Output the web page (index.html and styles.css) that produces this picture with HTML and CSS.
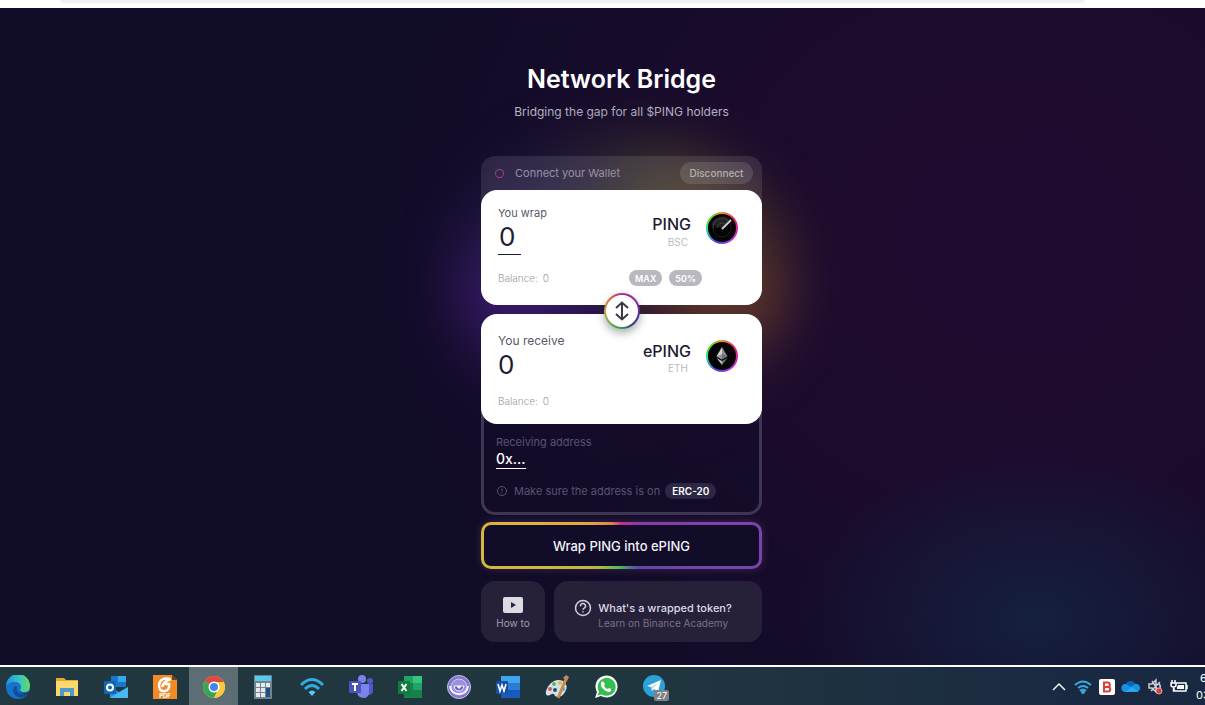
FILE: index.html
```html
<!DOCTYPE html>
<html lang="en">
<head>
    <meta charset="UTF-8">
    <meta name="viewport" content="width=device-width, initial-scale=1.0">
    <title>Network Bridge</title>
    <link rel="stylesheet" href="styles.css">
</head>
<body>
    <div class="browser-bar"><div class="address-bar"></div></div>

    <main class="page">
        <header class="intro">
            <h1>Network Bridge</h1>
            <p>Bridging the gap for all $PING holders</p>
        </header>

        <form class="bridge">
            <div class="glow"></div>

            <div class="wallet">
                <span class="wallet-ring"></span>
                <span class="wallet-text">Connect your Wallet</span>
                <button type="button" class="disconnect">Disconnect</button>
            </div>

            <div class="cards">
                <section class="card card-from">
                    <div class="amount">
                        <label for="wrapAmount">You wrap</label>
                        <input type="text" id="wrapAmount" class="amount-input" value="0">
                        <p class="balance">Balance: <span>0</span></p>
                    </div>
                    <div class="token">
                        <div class="token-row">
                            <div class="token-name">
                                <strong>PING</strong>
                                <span>BSC</span>
                            </div>
                            <div class="coin">
                                <svg viewBox="0 0 28 28" width="28" height="28">
                                    <circle cx="14" cy="14" r="14" fill="#050505"/>
                                    <path d="M14 14 22 5A12 12 0 0 0 3 11Z" fill="#222"/>
                                    <circle cx="14" cy="14" r="9" fill="none" stroke="#1c1c1c"/>
                                    <path d="M5 14A9 9 0 0 1 20 7M9 14A5 5 0 0 1 17 10" fill="none" stroke="#444"/>
                                    <path d="M14 15 23 6" stroke="#ccc" stroke-width="2"/>
                                </svg>
                            </div>
                        </div>
                        <div class="shares">
                            <button type="button">MAX</button>
                            <button type="button">50%</button>
                        </div>
                    </div>
                </section>

                <section class="card card-to">
                    <div class="amount">
                        <span class="amount-label">You receive</span>
                        <output class="amount-value">0</output>
                        <p class="balance">Balance: <span>0</span></p>
                    </div>
                    <div class="token">
                        <div class="token-row">
                            <div class="token-name">
                                <strong>ePING</strong>
                                <span>ETH</span>
                            </div>
                            <div class="coin">
                                <svg viewBox="0 0 28 28" width="28" height="28">
                                    <circle cx="14" cy="14" r="14" fill="#050505"/>
                                    <path d="M14 5 8.500 14.500 14 17.500Z" fill="#d5d5d5"/>
                                    <path d="M14 5 19.500 14.500 14 17.500Z" fill="#8d8d8d"/>
                                    <path d="M8.500 16 14 23V19Z" fill="#bbb"/>
                                    <path d="M19.500 16 14 23V19Z" fill="#777"/>
                                    <path d="M8.500 14.500 14 12 19.500 14.500 14 17.500Z" fill="#555" opacity=".5"/>
                                </svg>
                            </div>
                        </div>
                    </div>
                </section>

                <button type="button" class="swap" aria-label="Swap direction">
                    <svg viewBox="0 0 20 20" width="20" height="20" fill="none" stroke="#3a3748" stroke-width="2">
                        <path d="M10 2V18M4 7 10 1.500 16 7M4 13 10 18.500 16 13"/>
                    </svg>
                </button>
            </div>

            <div class="receiver">
                <label for="address">Receiving address</label>
                <input type="text" id="address" placeholder="0x...">
                <p class="hint">
                    <svg viewBox="0 0 12 12" width="12" height="12" fill="none" stroke="currentColor">
                        <circle cx="6" cy="6" r="4.500"/>
                        <path d="M6 3.500V6.500M6 7.500V8.500"/>
                    </svg>
                    <span>Make sure the address is on</span>
                    <b>ERC-20</b>
                </p>
            </div>

            <button type="submit" class="submit">Wrap PING into ePING</button>

            <nav class="links">
                <a href="#how-to" class="how-to">
                    <svg viewBox="0 0 22 16" width="22" height="16">
                        <rect x="1" y="0" width="20" height="16" rx="2" fill="#dddbe2"/>
                        <path d="M9 5 14 8 9 11Z" fill="#28223f"/>
                    </svg>
                    <span>How to</span>
                </a>
                <a href="#wrapped" class="learn">
                    <svg viewBox="0 0 18 18" width="18" height="18" fill="none" stroke="#d3d0de" stroke-width="1.500">
                        <circle cx="9" cy="9" r="7.500"/>
                        <path d="M6.500 7.200A2.500 2.500 0 1 1 10.200 9.200Q9 9.800 9 10.800M9 12.200V13.500"/>
                    </svg>
                    <span class="learn-text">
                        <strong>What's a wrapped token?</strong>
                        <span>Learn on Binance Academy</span>
                    </span>
                </a>
            </nav>
        </form>
    </main>

    <footer class="taskbar">
        <div class="apps">
            <button type="button" aria-label="Edge">
                <svg viewBox="0 0 24 24" width="24" height="24">
                    <defs><linearGradient id="edge" x1="0" y1="0" x2="1" y2="0"><stop offset="0" stop-color="#1f8fdb"/><stop offset=".5" stop-color="#35bfd0"/><stop offset="1" stop-color="#66dc60"/></linearGradient></defs>
                    <circle cx="12" cy="12" r="12" fill="#1673cb"/>
                    <path d="M0 11A12 12 0 0 1 24 11Q24 17 18 17 14 17 14 15 16 12 14 9 11 6 6 7 2 8 0 11Z" fill="url(#edge)"/>
                    <path d="M8 12Q5 19 12 22 18 24 22 18 16 21 12 17 10 15 11 11Z" fill="#124d97"/>
                    <path d="M14 15Q14 18 19 18L23 17Q25 18 24 21L20 19Q13 19 14 15Z" fill="#203840"/>
                </svg>
            </button>
            <button type="button" aria-label="File Explorer">
                <svg viewBox="0 0 24 24" width="24" height="24">
                    <path d="M1 3H9L11 5H23V21H1Z" fill="#e2a92d"/>
                    <path d="M1 6H23V21H1Z" fill="#fbd76d"/>
                    <path d="M5 13H19V21H15V17H9V21H5Z" fill="#4c9bc9"/>
                </svg>
            </button>
            <button type="button" aria-label="Outlook">
                <svg viewBox="0 0 24 24" width="24" height="24">
                    <path d="M7 1H22V12H7Z" fill="#1976c9"/>
                    <path d="M14 1H22V7H14Z" fill="#39a8e8"/>
                    <path d="M6 12 15 17 24 12V23H6Z" fill="#2492df"/>
                    <path d="M6 23 24 12V23Z" fill="#49b8ee"/>
                    <rect y="6" width="12" height="13" rx="1" fill="#0f66b7"/>
                    <circle cx="6" cy="12.500" r="3" fill="none" stroke="#fff" stroke-width="2"/>
                </svg>
            </button>
            <button type="button" aria-label="PDF reader">
                <svg viewBox="0 0 24 24" width="24" height="24">
                    <path d="M0 0H19L24 5V24H0Z" fill="#f28a27"/>
                    <path d="M19 0V5H24Z" fill="#6b431f"/>
                    <path d="M17 4Q7 2 6 10 6 17 12 16 17 15 16 9H11M9 12Q11 6 18 4" fill="none" stroke="#fff" stroke-width="2.500"/>
                    <text x="12" y="23" class="pdf-text">PDF</text>
                </svg>
            </button>
            <button type="button" class="active" aria-label="Chrome">
                <svg viewBox="0 0 24 24" width="24" height="24">
                    <circle cx="12" cy="12" r="11" fill="#f9cb3c"/>
                    <path d="M12 12 2.500 6.500A11 11 0 0 1 21.500 6.500Z" fill="#dc4a3f"/>
                    <path d="M12 12 2.500 6.500A11 11 0 0 0 12 23L16 14Z" fill="#35a557"/>
                    <path d="M12 7H21.800A11 11 0 0 1 12 23L16.500 14Z" fill="#f9cb3c"/>
                    <circle cx="12" cy="12" r="5.500" fill="#fff"/>
                    <circle cx="12" cy="12" r="4" fill="#4385ee"/>
                </svg>
            </button>
            <button type="button" aria-label="Calculator">
                <svg viewBox="0 0 24 24" width="24" height="24">
                    <rect x="3" width="18" height="24" rx="1" fill="#71838d"/>
                    <rect x="4" y="1" width="16" height="5" fill="#5bc9ea"/>
                    <path d="M5 8H9V12H5ZM10 8H14V12H10ZM15 8H19V12H15ZM5 13H9V17H5ZM10 13H14V17H10ZM5 18H9V22H5ZM10 18H14V22H10Z" fill="#e5eaed"/>
                    <path d="M15 13H19V22H15Z" fill="#1d4f86"/>
                </svg>
            </button>
            <button type="button" aria-label="Wireless">
                <svg viewBox="0 0 24 24" width="24" height="24" fill="none" stroke="#35a9e1" stroke-width="3">
                    <path d="M1 10Q12-1 23 10M5 14Q12 7 19 14"/>
                    <path d="M8.500 17Q12 14 15.500 17L12 21Z" fill="#5cc8f2" stroke="none"/>
                </svg>
            </button>
            <button type="button" aria-label="Teams">
                <svg viewBox="0 0 24 24" width="24" height="24">
                    <circle cx="13" cy="4" r="4" fill="#7b83eb"/>
                    <circle cx="21" cy="6" r="3" fill="#5059c9"/>
                    <path d="M17 9H24V16Q24 20 19 20Z" fill="#5059c9"/>
                    <path d="M8 9H20V17Q20 23 14 23 8 22 8 17Z" fill="#7b83eb"/>
                    <rect y="6" width="12" height="12" rx="1" fill="#4b53bc"/>
                    <path d="M3 9H9M6 9V16" stroke="#fff" stroke-width="2"/>
                </svg>
            </button>
            <button type="button" aria-label="Excel">
                <svg viewBox="0 0 24 24" width="24" height="24">
                    <path d="M6 1H24V23H6Z" fill="#188048"/>
                    <path d="M6 1H15V8H6Z" fill="#21a366"/>
                    <path d="M15 1H24V8H15Z" fill="#36c481"/>
                    <path d="M15 8H24V15H15Z" fill="#21a366"/>
                    <rect y="6" width="12" height="13" rx="1" fill="#107c41"/>
                    <path d="M3.500 9 8.500 16M8.500 9 3.500 16" stroke="#fff" stroke-width="2"/>
                </svg>
            </button>
            <button type="button" aria-label="Assistant">
                <svg viewBox="0 0 24 24" width="24" height="24">
                    <circle cx="12" cy="12" r="11.500" fill="#8076cf" stroke="#c7c2ee"/>
                    <circle cx="12" cy="12" r="8" fill="#9a91df" stroke="#cdc8f2"/>
                    <path d="M3 11Q4 19 12 19T21 11" fill="none" stroke="#f4f2ff" stroke-width="2"/>
                    <path d="M7 11H17Q16 16 12 16T7 11Z" fill="#6c60bd" stroke="#f4f2ff"/>
                    <path d="M10 11H14V12L12 14 10 12Z" fill="#f4f2ff"/>
                </svg>
            </button>
            <button type="button" aria-label="Word">
                <svg viewBox="0 0 24 24" width="24" height="24">
                    <path d="M5 1H24V23H5Z" fill="#185abd"/>
                    <path d="M5 1H24V8H5Z" fill="#41a5ee"/>
                    <path d="M5 8H24V15H5Z" fill="#2b7cd3"/>
                    <rect y="6" width="12" height="13" rx="1" fill="#1550a5"/>
                    <path d="M2 9 4 16 6 10 8 16 10 9" fill="none" stroke="#fff" stroke-width="1.600"/>
                </svg>
            </button>
            <button type="button" aria-label="Paint">
                <svg viewBox="0 0 24 24" width="24" height="24">
                    <path d="M5 9Q11 3 18 6 24 10 20 17 16 24 10 21 9 17 5 20 0 22 1 16 2 12 5 9Z" fill="#d2e2ea"/>
                    <circle cx="5" cy="14" r="2" fill="#d95853"/>
                    <circle cx="9" cy="9" r="2" fill="#69b365"/>
                    <circle cx="15" cy="8" r="2" fill="#e7b746"/>
                    <circle cx="10" cy="15" r="2" fill="#294a70"/>
                    <circle cx="18" cy="14" r="2" fill="#4ba2d6"/>
                    <path d="M21 4 13 23" stroke="#c88b4b" stroke-width="3"/>
                    <path d="M18 3 21 0 24 2 22 6Z" fill="#bd8a61"/>
                </svg>
            </button>
            <button type="button" aria-label="WhatsApp">
                <svg viewBox="0 0 24 24" width="24" height="24">
                    <path d="M1 23 3 17A11 11 0 1 1 7 21Z" fill="#fff"/>
                    <path d="M3.500 20.500 5 16.500A9 9 0 1 1 8 19.500Z" fill="#35bd52"/>
                    <path d="M8 6.500Q10 6 11 9.500L10 11Q11 13 13.500 14L15 13Q18 14 17 16 15 18 11 15.500 6 12 7 8Z" fill="#fff"/>
                </svg>
            </button>
            <button type="button" aria-label="Telegram">
                <svg viewBox="0 0 24 24" width="24" height="24">
                    <circle cx="11" cy="11" r="11" fill="#2ca0d9"/>
                    <path d="M4 11 18 5 15 17 11 14 9 16 8 12Z" fill="#fff"/>
                    <path d="M8 12 15 8 10 13 9 16Z" fill="#b7d9eb"/>
                </svg>
                <span class="badge">27</span>
            </button>
        </div>
        <div class="tray">
            <svg viewBox="0 0 24 24" width="24" height="24" fill="none" stroke="#f0f2f5" stroke-width="1.500"><path d="M6 15 12 9 18 15"/></svg>
            <svg viewBox="0 0 24 24" width="24" height="24" fill="none" stroke="#38a8dd" stroke-width="2"><path d="M4 10Q12 3 20 10M7 13Q12 9 17 13M9 16Q12 13 15 16"/><circle cx="12" cy="17" r="1" fill="#75d3fa"/></svg>
            <svg viewBox="0 0 24 24" width="24" height="24"><rect x="4" y="4" width="16" height="16" rx="2" fill="#fff"/><path d="M9 7.500H12.500A2 2 0 0 1 12.500 12H9ZM9 12H13A2 2 0 0 1 13 16.500H9Z" fill="none" stroke="#dc3e3b" stroke-width="2"/></svg>
            <svg viewBox="0 0 24 24" width="24" height="24"><path d="M6 17A4 4 0 0 1 7 9 5 5 0 0 1 16 9 4 4 0 0 1 18 17Z" fill="#1593e5"/><path d="M6 17 13 12 19 16 18 17Z" fill="#2fa5ea"/><path d="M7 9A5 5 0 0 1 16 9L12 12Z" fill="#0767b7"/></svg>
            <svg viewBox="0 0 24 24" width="24" height="24" fill="none" stroke="#cbd0d6" stroke-width="1.500"><path d="M6 9H9L13 5V17L9 13H6ZM8 16 17 7M15 8Q18 10 17 13M9 6 15 15"/><circle cx="16" cy="16" r="3" fill="#d3413f" stroke="#f1a19d" stroke-width="1"/></svg>
            <svg viewBox="0 0 24 24" width="24" height="24" fill="none" stroke="#fff" stroke-width="1.500"><path d="M9 8H19V16H7V13M20 10V14M5 5V8M8 5V8M4 8H9V10Q9 12 6.500 12 4 12 4 10ZM6.500 12V16H9"/><path d="M11 10H17V14H10V12Z" fill="#fff" stroke="none"/></svg>
        </div>
        <div class="clock">
            <span class="time">6</span>
            <span>03</span>
        </div>
    </footer>
</body>
</html>
```

FILE: styles.css
```css
* {
    box-sizing: border-box;
}
body {
    margin: 0;
    min-height: 100vh;
    display: flex;
    flex-direction: column;
    font-family: Inter, "Liberation Sans", sans-serif;
    background: #110c28;
    overflow: hidden;
}
h1, p {
    margin: 0;
}
button, input {
    font-family: inherit;
    padding: 0;
    border: none;
}
button {
    cursor: pointer;
}
a {
    text-decoration: none;
}

/* bottom edge of the browser toolbar */
.browser-bar {
    height: 8px;
    padding: 0 10% 0 5%;
    background: #fff;
}
.address-bar {
    height: 3px;
    background: #eff1f4;
    border-radius: 0 0 8px 8px;
}

.page {
    flex: 1;
    display: flex;
    flex-direction: column;
    align-items: center;
    padding: 54px 0 22px 38px;
    background:
        radial-gradient(ellipse 240px 170px at 86% 93%, #15203f 0%, rgba(21, 32, 63, 0) 100%),
        radial-gradient(ellipse 640px 580px at 84% 36%, #1f0b2f 0%, #1d0b2e 35%, rgba(31, 11, 47, 0) 100%),
        #110c28;
}
.intro {
    text-align: center;
    color: #fff;
    margin-bottom: 34px;
}
.intro h1 {
    font-size: 25px;
    line-height: 34px;
    font-weight: 600;
}
.intro p {
    margin-top: 6px;
    font-size: 12px;
    line-height: 20px;
    color: #bab6cb;
}

.bridge {
    position: relative;
    width: 281px;
    display: flex;
    flex-direction: column;
    z-index: 0;
}
/* coloured light behind the cards */
.glow {
    position: absolute;
    z-index: -1;
    inset: -14px -24px 230px;
    border-radius: 50%;
    background: conic-gradient(from 0deg at 50% 50%, #3a3730, #5c5428 35deg, #5c4122 75deg, #85502c 105deg, #3a1a2c 135deg, #1d0f30 190deg, #331866 230deg, #4a2288 260deg, #2a1d58 290deg, #28224a 320deg, #3a3730);
    filter: blur(30px);
    opacity: 0.75;
}

.wallet {
    display: flex;
    align-items: center;
    height: 50px;
    margin-bottom: -16px;
    padding: 0 9px 16px 14px;
    border-radius: 14px 14px 0 0;
    background: rgba(255, 255, 255, 0.1);
}
.wallet-ring {
    width: 9px;
    height: 9px;
    border: 1px solid #a13d99;
    border-left-color: #68536a;
    border-radius: 50%;
}
.wallet-text {
    margin-left: 11px;
    font-size: 11px;
    color: #9792a9;
}
.disconnect {
    width: 73px;
    height: 22px;
    margin-left: auto;
    border-radius: 11px;
    font-size: 10px;
    font-weight: 500;
    color: #b5afaf;
    background: rgba(255, 255, 255, 0.12);
}

.cards {
    position: relative;
    display: flex;
    flex-direction: column;
    gap: 9px;
}
.card {
    display: flex;
    justify-content: space-between;
    padding: 15px 24px 0 17px;
    background: #fff;
    border-radius: 16px;
}
.card-from {
    height: 115px;
}
.card-to {
    height: 110px;
    padding-top: 19px;
}
.amount {
    display: flex;
    flex-direction: column;
    align-items: flex-start;
}
.amount label, .amount-label {
    font-size: 12px;
    line-height: 16px;
    color: #5b5868;
}
.amount label {
    font-size: 11px;
}
.amount-input, .amount-value {
    font-size: 26px;
    line-height: 32px;
    color: #1f1b33;
}
.amount-input {
    width: 23px;
    height: 34px;
    padding: 0 0 2px 1px;
    border-bottom: 1px solid #1f1b33;
    background: transparent;
}
.balance {
    margin-top: 15px;
    font-size: 10px;
    line-height: 16px;
    font-weight: 300;
    color: #9c9aa5;
}
.card-to .balance {
    margin-top: 12px;
}
.balance span {
    margin-left: 2px;
}
.token {
    display: flex;
    flex-direction: column;
    align-items: flex-end;
}
.token-row {
    display: flex;
    gap: 15px;
    margin-top: 7px;
}
.token-name {
    display: flex;
    flex-direction: column;
    align-items: flex-end;
}
.token-name strong {
    font-size: 16px;
    line-height: 24px;
    font-weight: 500;
    color: #1f1b33;
}
.token-name span {
    padding-right: 3px;
    font-size: 10px;
    line-height: 13px;
    color: #bbb9c2;
}
.card-to .token-name strong {
    line-height: 22px;
}
.coin {
    width: 32px;
    height: 32px;
    padding: 2px;
    border-radius: 50%;
    background: conic-gradient(#eb912c, #e52a64, #d02bbd, #a82be1, #4a4ed8, #2ad3b0, #5ae02c, #eb912c);
}
.coin svg {
    display: block;
}
.shares {
    display: flex;
    gap: 7px;
    margin: 21px 36px 0 0;
}
.shares button {
    height: 16px;
    padding: 0 6px;
    border-radius: 8px;
    font-size: 9px;
    font-weight: 600;
    color: #fff;
    background: #b9b7bf;
}
.swap {
    position: absolute;
    top: 103px;
    left: calc(50% - 18px);
    display: grid;
    place-items: center;
    width: 36px;
    height: 36px;
    border: 2px solid transparent;
    border-radius: 50%;
    background:
        linear-gradient(#fff, #fff) padding-box,
        conic-gradient(#b42b94, #8a269d 60deg, #4a2f9b 110deg, #37318c 140deg, #2f9a55 180deg, #64a64b 220deg, #c4aa4f 270deg, #d7723e 310deg, #b42b94) border-box;
    box-shadow: 0 4px 9px rgba(30, 60, 40, 0.4);
}

.receiver {
    display: flex;
    flex-direction: column;
    align-items: flex-start;
    margin-top: -16px;
    padding: 26px 12px 13px;
    border: 3px solid #3d3753;
    border-top: none;
    border-radius: 0 0 14px 14px;
    background: rgba(17, 12, 40, 0.5);
    /* tucked under the lower card */
    position: relative;
    z-index: -1;
}
.receiver label {
    font-size: 11px;
    line-height: 16px;
    color: #5a5470;
}
.receiver input {
    width: 30px;
    height: 19px;
    padding-bottom: 1px;
    border-bottom: 1px solid #fff;
    background: transparent;
    font-size: 14px;
    font-weight: 500;
    color: #fff;
}
.receiver input::placeholder {
    color: #fff;
    opacity: 1;
}
.hint {
    display: flex;
    align-items: center;
    margin-top: 14px;
    font-size: 11px;
    line-height: 16px;
    color: #5a5470;
}
.hint span {
    margin: 0 5px 0 6px;
}
.hint b {
    padding: 0 7px;
    border-radius: 8px;
    font-size: 10px;
    font-weight: 600;
    color: #fff;
    background: #2d2745;
}

.submit {
    height: 47px;
    margin-top: 7px;
    border: 3px solid transparent;
    border-radius: 10px;
    font-size: 13px;
    font-weight: 500;
    color: #f4f2fa;
    background:
        linear-gradient(#110c28, #110c28) padding-box,
        conic-gradient(#c42f91, #8c3ba8 40deg, #7c43b0 90deg, #5d46ae 140deg, #4f51ad 145deg, #4ebd59 185deg, #b1b747 225deg, #d9b83c 270deg, #e5a741 300deg, #dc8250 335deg, #c42f91) border-box;
    box-shadow: 0 0 9px rgba(125, 90, 130, 0.35);
}

.links {
    display: flex;
    gap: 9px;
    margin-top: 12px;
}
.links a {
    display: flex;
    align-items: center;
    justify-content: center;
    height: 61px;
    border-radius: 14px;
    background: #262039;
    font-size: 10px;
    line-height: 14px;
}
.links .how-to {
    flex-direction: column;
    gap: 3px;
    width: 64px;
    color: #a29eb0;
    padding-top: 4px;
}
.links .learn {
    flex: 1;
    gap: 6px;
    padding: 7px 10px 0 0;
}
.learn > svg {
    margin-bottom: 14px;
}
.learn-text {
    display: flex;
    flex-direction: column;
    color: #777286;
}
.learn-text strong {
    font-size: 11px;
    line-height: 16px;
    font-weight: 500;
    color: #dedbea;
}

.taskbar {
    display: flex;
    height: 40px;
    border-top: 2px solid #fff;
    background: linear-gradient(90deg, #223840 0%, #20363f 55%, #1a2942 90%);
    overflow: hidden;
}
.apps {
    display: flex;
    margin-left: -7px;
}
.apps button {
    position: relative;
    display: grid;
    place-items: center;
    width: 49px;
    padding-top: 1px;
    background: transparent;
}
.apps .active {
    background: #5d6d74;
}
.pdf-text {
    font-size: 6px;
    font-weight: 700;
    fill: #fff;
    text-anchor: middle;
}
.badge {
    position: absolute;
    right: 10px;
    bottom: 4px;
    padding: 0 2px;
    font-size: 9px;
    line-height: 11px;
    color: #fff;
    background: #7c8286;
    border-radius: 2px;
}
.tray {
    display: flex;
    align-items: center;
    margin-left: auto;
    padding-top: 2px;
}
.clock {
    display: flex;
    flex-direction: column;
    width: 14px;
    padding: 3px 0 0 5px;
    font-size: 11px;
    line-height: 17px;
    color: #fff;
    overflow: hidden;
}
.clock .time {
    padding-left: 4px;
}
```
